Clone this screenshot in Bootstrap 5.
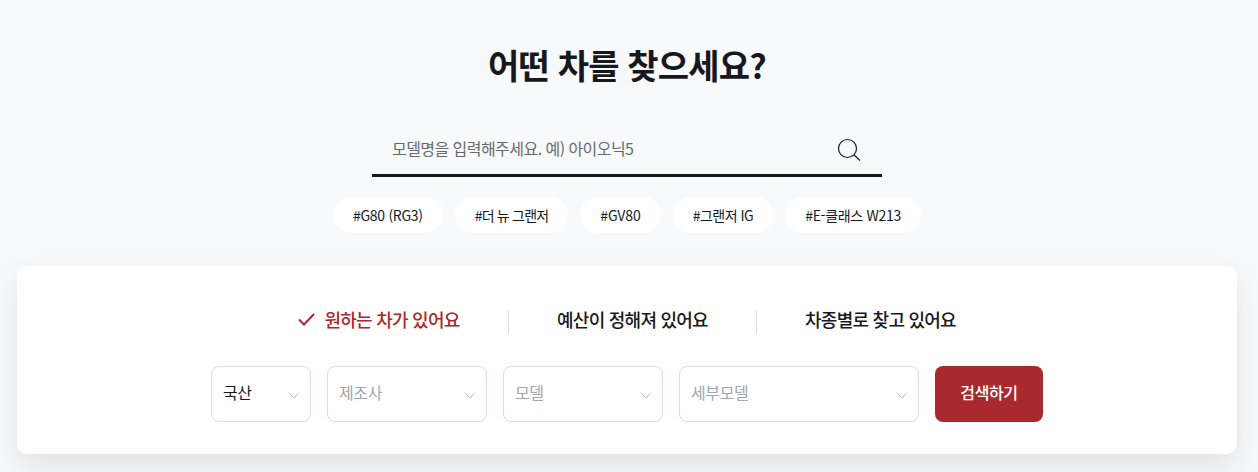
<!DOCTYPE html>
<html lang="ko">
<head>
    <meta charset="UTF-8">
    <meta name="viewport" content="width=device-width, initial-scale=1.0">
    <title>어떤 차를 찾으세요?</title>
    <link href="https://cdn.jsdelivr.net/npm/bootstrap@5.3.2/dist/css/bootstrap.min.css" rel="stylesheet">
    <style>
        html, body {
            height: 472px;
            overflow: hidden;
        }
        body {
            background: #f8f9fa;
            font-family: "Noto Sans CJK KR", "Noto Sans", sans-serif;
            color: #16181d;
        }
        .page-wrap {
            width: 1254px;
        }
        .finder-title {
            margin: 0;
            padding-top: 40px;
            height: 95px;
            font-size: 34px;
            line-height: 50px;
            font-weight: 700;
            letter-spacing: -0.8px;
            text-align: center;
        }
        .finder-search {
            width: 510px;
            height: 48px;
            margin: 34px auto 0;
            border-bottom: 3px solid #16181d;
        }
        .finder-search .form-control {
            height: 45px;
            padding: 0 0 7px 20px;
            font-size: 16px;
            letter-spacing: -0.55px;
            background: transparent;
            border: 0;
            box-shadow: none;
        }
        .finder-search .form-control::placeholder {
            color: #666a70;
            opacity: 1;
        }
        .search-btn {
            width: 44px;
            height: 45px;
            margin-right: 11px;
            padding: 0 0 4px;
            border: 0;
            background: transparent;
        }
        .tag-row {
            margin-top: 20px;
            gap: 12px;
        }
        .tag-pill {
            height: 36px;
            padding: 0 20px;
            font-size: 14px;
            line-height: 36px;
            letter-spacing: -0.3px;
            color: #16181d;
            background: #fff;
            border-radius: 18px;
            text-decoration: none;
        }
        .tag-wide { letter-spacing: -0.1px; }
        .tag-mid { letter-spacing: -0.5px; }
        .tag-tight { letter-spacing: -0.8px; }
        .finder-box {
            height: 188px;
            margin: 33px 17px 0;
            padding-top: 45px;
            background: #fff;
            border: 0;
            border-radius: 10px;
            box-shadow: 0 14px 30px rgba(30, 35, 45, .1);
        }
        .tab-row {
            margin-left: 10px;
        }
        .tab-item {
            width: 248px;
            height: 22px;
            padding-bottom: 6px;
            font-size: 18px;
            line-height: 18px;
            font-weight: 500;
            letter-spacing: -0.75px;
            color: #16181d;
            text-decoration: none;
        }
        .tab-item + .tab-item {
            border-left: 1px solid #d8dade;
        }
        .tab-item.is-on {
            padding-right: 10px;
            color: #a9292e;
        }
        .tab-item svg {
            margin-right: 9px;
        }
        .filter-row {
            margin-top: 33px;
            gap: 16px;
        }
        .filter-row .form-select {
            height: 56px;
            padding: 0 12px 4px 11px;
            font-size: 16px;
            letter-spacing: -0.4px;
            color: #a3a6ab;
            border: 1px solid #d9dde6;
            border-radius: 8px;
            box-shadow: none;
            background-image: url("data:image/svg+xml,%3csvg xmlns='http://www.w3.org/2000/svg' viewBox='0 0 12 7'%3e%3cpath fill='none' stroke='%23bcbfc4' d='M.7.7 6 6 11.3.7'/%3e%3c/svg%3e");
            background-size: 12px 7px;
            background-position: right 10px top 25px;
        }
        .filter-row .form-select.is-set {
            color: #16181d;
        }
        .w-100px { width: 100px; }
        .w-160px { width: 160px; }
        .w-240px { width: 240px; }
        .find-btn {
            width: 108px;
            height: 56px;
            padding: 0 0 4px;
            font-size: 16px;
            font-weight: 500;
            letter-spacing: -0.4px;
            color: #fff;
            background: #a9292e;
            border: 0;
            border-radius: 8px;
        }
    </style>
</head>
<body>
    <div class="page-wrap">
        <h1 class="finder-title">어떤 차를 찾으세요?</h1>

        <div class="finder-search d-flex align-items-center">
            <input type="text" class="form-control rounded-0" placeholder="모델명을 입력해주세요. 예) 아이오닉5">
            <button type="button" class="search-btn d-flex align-items-center justify-content-center flex-shrink-0" aria-label="검색">
                <svg width="24" height="24" viewBox="0 0 24 24" fill="none" stroke="#16181d" stroke-width="1.2">
                    <circle cx="10.5" cy="10.5" r="9"/>
                    <path d="M17 17l6 5.5"/>
                </svg>
            </button>
        </div>

        <div class="tag-row d-flex justify-content-center">
            <a href="#" class="tag-pill">#G80 (RG3)</a>
            <a href="#" class="tag-pill tag-tight">#더 뉴 그랜저</a>
            <a href="#" class="tag-pill tag-wide">#GV80</a>
            <a href="#" class="tag-pill tag-mid">#그랜저 IG</a>
            <a href="#" class="tag-pill">#E-클래스 W213</a>
        </div>

        <div class="card finder-box">
            <div class="tab-row d-flex justify-content-center">
                <a href="#" class="tab-item is-on d-flex align-items-center justify-content-center">
                    <svg width="17" height="13" viewBox="0 0 17 13" fill="none" stroke="#a9292e" stroke-width="2">
                        <path d="M1 6.5l5 5L16 1"/>
                    </svg>
                    원하는 차가 있어요
                </a>
                <a href="#" class="tab-item d-flex align-items-center justify-content-center">예산이 정해져 있어요</a>
                <a href="#" class="tab-item d-flex align-items-center justify-content-center">차종별로 찾고 있어요</a>
            </div>
            <div class="filter-row d-flex justify-content-center">
                <select class="form-select is-set w-100px"><option>국산</option></select>
                <select class="form-select w-160px"><option>제조사</option></select>
                <select class="form-select w-160px"><option>모델</option></select>
                <select class="form-select w-240px"><option>세부모델</option></select>
                <button type="button" class="btn find-btn">검색하기</button>
            </div>
        </div>
    </div>

    <script src="https://cdn.jsdelivr.net/npm/bootstrap@5.3.2/dist/js/bootstrap.bundle.min.js"></script>
</body>
</html>
